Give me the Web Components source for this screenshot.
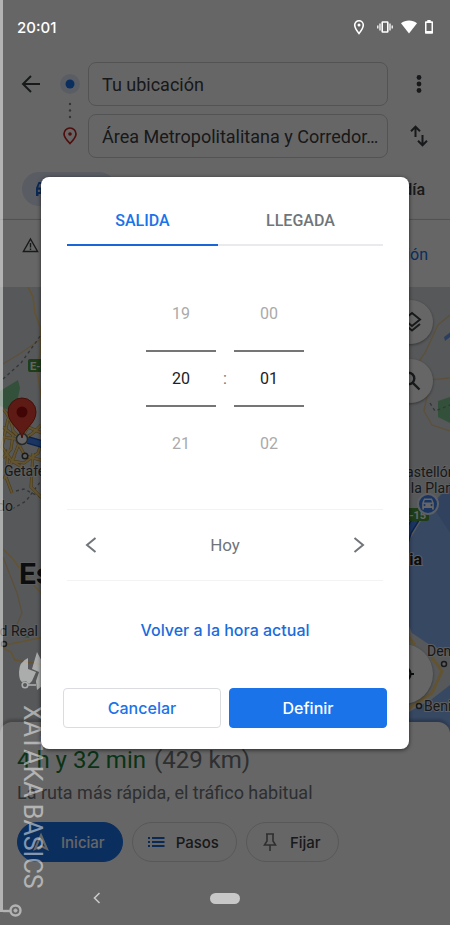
<!DOCTYPE html>
<html lang="es">
<head>
<meta charset="utf-8">
<meta name="viewport" content="width=device-width, initial-scale=1">
<title>Hora de salida</title>
<style>
html, body {
    margin: 0;
    background: #fff;
    font-family: Roboto, "Liberation Sans", sans-serif;
}
</style>
</head>
<body>
<maps-app></maps-app>

<script>
// every element shares this small reset
const base = `
*{
    box-sizing: border-box;
}

button, input{
    font: inherit;
    color: inherit;
    background: none;
    border: 0;
    padding: 0;
    margin: 0;
}

svg{
    display: block;
    flex: none;
}
`;

function define(name, css, html) {
    const template = document.createElement("template");
    template.innerHTML = `<style>${base}${css}</style>${html}`;

    customElements.define(name, class extends HTMLElement {
        constructor() {
            super();
            this.attachShadow({ mode: "open" });
            this.shadowRoot.appendChild(template.content.cloneNode(true));
        }
    });
}

define("status-bar", `
:host{
    display: flex;
    align-items: center;
    justify-content: space-between;
    height: 54px;
    padding: 0 17px;
    position: relative;
    z-index: 2;
    color: #fff;
    font: 500 15px Inter, sans-serif;
}

div{
    display: flex;
    gap: 8px;
}
`, `
<time>20:01</time>
<div>
    <svg width="16" height="16" viewBox="0 0 16 16" fill="none" stroke="#fff" stroke-width="1.6"><path d="M6 14.5C3.200 11 1.700 8.600 1.700 6a4.300 4.300 0 0 1 8.600 0c0 2.600-1.500 5-4.300 8.500z"/><circle cx="6" cy="6" r="1.500" fill="#fff" stroke="none"/></svg>
    <svg width="16" height="16" viewBox="0 0 16 16" fill="none" stroke="#fff"><rect x="5.200" y="3" width="5.600" height="10" rx="0.500" stroke-width="1.600"/><path d="M3 4.500v7M13 4.500v7" stroke-width="1.300"/><path d="M.8 6.500v3M15.200 6.500v3" stroke-width="1.300"/></svg>
    <svg width="16" height="16" viewBox="0 0 16 16" fill="#fff"><path d="M0 4.200C4.500.6 11.500.6 16 4.200L8 14.500z"/></svg>
    <svg width="8" height="16" viewBox="0 0 8 16" fill="#fff"><path fill-rule="evenodd" d="M2.300 1h3.400v1.300H7.200q.8 0 .8.800V14q0 .8-.8.800H.8Q0 14.800 0 14V3.100q0-.8.800-.8h1.500zM1.500 4v8h5V4z"/></svg>
</div>
`);

define("route-header", `
:host{
    display: grid;
    grid-template-columns: 46px 34px 1fr 62px;
    align-items: center;
    row-gap: 8px;
    padding: 8px 0 0 8px;
    color: #3c4043;
}

.stops{
    grid-column: 2;
    grid-row: 1 / 3;
}

button{
    display: grid;
    place-items: center;
    height: 44px;
}

input{
    grid-column: 3;
    width: 100%;
    height: 44px;
    padding: 0 4px 0 13px;
    border: 1px solid #cdd0d4;
    border-radius: 8px;
    font-size: 18px;
    text-overflow: ellipsis;
}
`, `
<button aria-label="Atrás"><svg width="20" height="20" viewBox="0 0 20 20" fill="none" stroke="#3c4043" stroke-width="2"><path d="M19 10H2M10 2l-8 8 8 8"/></svg></button>
<svg class="stops" width="34" height="96" viewBox="0 0 34 96">
    <circle cx="16" cy="22" r="10" fill="#e3e9fb"/>
    <circle cx="16" cy="22" r="4.500" fill="#1a73e8"/>
    <g fill="#80868b"><circle cx="16" cy="42" r="1.200"/><circle cx="16" cy="48.500" r="1.200"/><circle cx="16" cy="55" r="1.200"/></g>
    <path d="M16 81.500c-4-4-6-6.500-6-9.500a6 6 0 0 1 12 0c0 3-2 5.500-6 9.500z" fill="none" stroke="#c5221f" stroke-width="1.700"/>
    <circle cx="16" cy="72" r="1.800" fill="#c5221f"/>
</svg>
<input aria-label="Origen" value="Tu ubicación">
<button aria-label="Más opciones"><svg width="6" height="20" viewBox="0 0 6 20" fill="#3c4043"><circle cx="3" cy="3.500" r="2.400"/><circle cx="3" cy="10" r="2.400"/><circle cx="3" cy="16.500" r="2.400"/></svg></button>
<input aria-label="Destino" value="Área Metropolitalitana y Corredor…">
<button aria-label="Invertir ruta"><svg width="18" height="22" viewBox="0 0 18 22" fill="none" stroke="#3c4043" stroke-width="2"><path d="M5.500 12V2M1 6.200l4.500-4.500L10 6.200M12.500 10v10M8 15.800l4.500 4.500 4.500-4.500"/></svg></button>
`);

define("travel-modes", `
:host{
    display: flex;
    align-items: center;
    justify-content: space-between;
    padding: 14px 25px 13px 22px;
    border-bottom: 1px solid #dadce0;
    color: #3c4043;
    font-size: 16px;
    font-weight: 500;
}

button{
    display: flex;
    align-items: center;
    gap: 8px;
    height: 34px;
}

.selected{
    width: 94px;
    padding-left: 12px;
    border-radius: 17px;
    background: #dfe5f8;
    color: #1967d2;
}
`, `
<button class="selected"><svg width="18" height="18" viewBox="0 0 18 18" fill="#1967d2"><path fill-rule="evenodd" d="M4.500 2h9l2.500 6v8h-2.500v-2h-9v2H2V8zM5.500 4L4.300 7.500h9.400L12.500 4zM5 9.500a1.300 1.300 0 1 0 .1 0zM13 9.500a1.300 1.300 0 1 0 .1 0z"/></svg>4 h</button>
<button>1 día</button>
`);

define("route-notice", `
:host{
    display: flex;
    justify-content: space-between;
    align-items: flex-start;
    height: 67px;
    padding: 17px 22px 0;
    box-shadow: 0 1px 3px rgba(0, 0, 0, .4);
    position: relative;
    background: #fff;
}

a{
    padding-top: 8px;
    color: #1a73e8;
    font-size: 16px;
    line-height: 20px;
    text-decoration: none;
}
`, `
<svg width="17" height="16" viewBox="0 0 17 16"><path d="M8.500 2L15.600 14.500H1.400z" fill="none" stroke="#3c4043" stroke-width="1.400"/><path d="M8.500 6v4.500M8.500 11.500V13" stroke="#3c4043" stroke-width="1.400"/></svg>
<a href="#">Más información</a>
`);

define("route-map", `
:host{
    display: block;
    flex: 1;
    min-height: 200px;
    margin-bottom: -12px;
    position: relative;
    overflow: hidden;
    background: #d9dcdf;
}

.map{
    position: absolute;
    inset: 0;
    width: 100%;
    height: 100%;
}

text{
    fill: #3c4043;
    font-size: 14px;
    paint-order: stroke;
    stroke: #e8eaed;
    stroke-width: 2px;
}

.big{
    fill: #202124;
    font-size: 30px;
    font-weight: 700;
}

.city{
    fill: #202124;
    font-size: 16px;
    font-weight: 700;
}

.sign{
    fill: #fff;
    stroke: none;
    font-size: 11px;
    font-weight: 700;
}

button{
    position: absolute;
    right: 17px;
    display: grid;
    place-items: center;
    width: 44px;
    height: 44px;
    border-radius: 50%;
    background: #fff;
    box-shadow: 0 1px 3px rgba(0, 0, 0, .4);
}

.layers{
    top: 13px;
}

.search{
    top: 72px;
}

.locate{
    bottom: 30px;
    width: 60px;
    height: 60px;
}
`, `
<svg class="map" viewBox="0 0 450 447" preserveAspectRatio="xMidYMid slice">
    <path d="M450 196L427 224 409 254 398 285 400 318 412 346 430 358 450 366zM450 398L432 412 409 425 380 447H450z" fill="#8ab4f8"/>
    <path d="M450 196l-17 24 17 26z" fill="#7aa5ec"/>
    <path d="M0 104l18-11 2 8-3 15-9 7-8-4zM438 114l12-4v26l-12-6zM23 350l9-9-3 10z" fill="#81c995"/>
    <path d="M444 50l8-6-2 6-5 4z" fill="#669df6"/>
    <g fill="none" stroke="#f7cf7d" stroke-width="1.600">
        <path d="M28 0l5 10 2 16 5 14 1 20-4 24 5 30"/>
        <path d="M3 262l10 10 10 14 18 20" />
        <path d="M3 361l8 4 4 8 30 5M0 359l20-4 25-5"/>
    </g>
    <g fill="none" stroke="#e6c898" stroke-width="1.400">
        <path d="M3 77l18-11 20-14M3 270l14 36 5 20-7 16"/>
        <path d="M450 28l-12 10-13 28-16 22M409 80l10 14 31-3M430 94l-6 30 8 14 18 6"/>
    </g>
    <path d="M3 92l18-16 20-28M16 204l8-2 16 8M12 222l14-8 15-20M430 116l5 8 15-6" fill="none" stroke="#80868b" stroke-width="1.400" stroke-dasharray="3 3"/>
    <g fill="none" stroke="#b58b35" stroke-width="3">
        <path d="M3 122q8 8 10 22l8 8q10-2 20-14M3 140l10 8-2 14-8 9M8 132l-6 28 10 14 12 2 14-10 5-14M3 150l13 2 9 17 16 4M15 168l-11 24M33 166l-2 34 12 12M8 162l-2 28 6 16M42 146l-14-6-8 14-8 20 10 6"/>
    </g>
    <g fill="none" stroke="#f4cf7b" stroke-width="2">
        <path d="M3 122q8 8 10 22l8 8q10-2 20-14M3 140l10 8-2 14-8 9M8 132l-6 28 10 14 12 2 14-10 5-14M3 150l13 2 9 17 16 4M15 168l-11 24M33 166l-2 34 12 12M8 162l-2 28 6 16M42 146l-14-6-8 14-8 20 10 6"/>
        <path d="M409 350l6 8M430 368l12 16-10 22-24 16" stroke-width="3"/>
    </g>
    <path d="M28 153l14 4 30 28 150 70 180 10 6-20 22-36" fill="none" stroke="#1a56c4" stroke-width="8"/>
    <path d="M28 153l14 4 30 28 150 70 180 10 6-20 22-36" fill="none" stroke="#4285f4" stroke-width="5"/>

    <rect x="28" y="72" width="26" height="13" rx="2" fill="#4b9a3c"/>
    <text class="sign" x="30" y="83">E-5</text>
    <rect x="400" y="221" width="29" height="13" rx="2" fill="#4b9a3c"/>
    <text class="sign" x="403" y="232">E-15</text>

    <circle cx="22" cy="152" r="5.500" fill="#fff" stroke="#5f6368" stroke-width="1.500"/>
    <path d="M22 151c-1-9-14-14-14-26a14 14 0 0 1 28 0c0 12-13 17-14 26z" fill="#ea4335" stroke="#a52714"/>
    <circle cx="22" cy="125" r="5.500" fill="#a50e0e"/>

    <g fill="#e8eaed" stroke="#3c4043" stroke-width="1.500">
        <circle cx="25" cy="169" r="2.800"/>
        <circle cx="4" cy="357" r="2.500"/>
        <circle cx="444" cy="377" r="2.500"/>
        <circle cx="419" cy="419" r="2.500"/>
    </g>

    <text x="4" y="189">Getafe</text>
    <text x="13" y="224" text-anchor="end">Toledo</text>
    <text class="big" x="19" y="297">España</text>
    <text x="38" y="349" text-anchor="end">Ciudad Real</text>
    <text x="397" y="190">Castellón</text>
    <text x="392" y="206">de la Plana</text>
    <text class="city" x="422" y="278" text-anchor="end">Valencia</text>
    <text x="427" y="369">Denia</text>
    <text x="424" y="424">Benidorm</text>

    <circle cx="428" cy="217" r="10" fill="#4285f4" stroke="#e8f0fe" stroke-width="2"/>
    <path fill="#fff" fill-rule="evenodd" d="M424 211.500h8l1.800 4.500v6.500H432V221h-8v1.500h-1.800V216zM424.800 213l-.9 2.500h8.200l-.9-2.500zM424.500 217a1 1 0 1 0 .1 0zM431.500 217a1 1 0 1 0 .1 0z"/>
</svg>
<button class="layers" aria-label="Capas"><svg width="22" height="22" viewBox="0 0 22 22" fill="none" stroke="#3c4043" stroke-width="2"><path d="M12 2l8 6.500-8 6.500-8-6.500zM4 13l8 6.500 8-6.500"/></svg></button>
<button class="search" aria-label="Buscar"><svg width="22" height="22" viewBox="0 0 22 22" fill="none" stroke="#3c4043" stroke-width="2.400"><circle cx="8.500" cy="8.500" r="5.800"/><path d="M12.800 12.800L19.500 19.500"/></svg></button>
<button class="locate" aria-label="Mi ubicación"><svg width="24" height="24" viewBox="0 0 24 24" fill="none" stroke="#202124" stroke-width="2.200"><circle cx="12" cy="12" r="7.500"/><circle cx="12" cy="12" r="3" fill="#202124"/><path d="M12 1v4M12 19v4M1 12h4M19 12h4"/></svg></button>
`);

define("pill-button", `
:host{
    display: block;
}

button{
    display: flex;
    align-items: center;
    gap: 8px;
    height: 40px;
    padding: 0 17px 0 11px;
    border: 1px solid #dadce0;
    border-radius: 20px;
    color: #3c4043;
    font: 500 15px Inter, sans-serif;
}

:host([primary]) button{
    background: #1a73e8;
    border-color: #1a73e8;
    color: #fff;
}
`, `
<button><slot name="icon"></slot><slot></slot></button>
`);

define("route-summary", `
:host{
    display: block;
    position: relative;
    padding: 22px 17px 9px;
    border-radius: 12px 12px 0 0;
    background: #fff;
    box-shadow: 0 -3px 3px rgba(0, 0, 0, .2);
}

h1{
    margin: 0;
    color: #188038;
    font-size: 24px;
    font-weight: 400;
    line-height: 32px;
}

span{
    margin-left: 2px;
    color: #70757a;
}

p{
    margin: 6px 0 18px;
    color: #70757a;
    font-size: 18px;
    line-height: 22px;
}

div{
    display: flex;
    gap: 9px;
}
`, `
<h1>4 h y 32 min <span>(429 km)</span></h1>
<p>La ruta más rápida, el tráfico habitual</p>
<div>
    <pill-button primary><svg slot="icon" width="24" height="24" viewBox="0 0 24 24" fill="none" stroke="#fff" stroke-width="2"><path d="M12 5l6 14-6-3-6 3z"/></svg>Iniciar</pill-button>
    <pill-button><svg slot="icon" width="24" height="24" viewBox="0 0 24 24" stroke="#1967d2" stroke-width="2"><path d="M8 8h12.500M8 12h12.500M8 16h12.500M4 8h2M4 12h2M4 16h2"/></svg>Pasos</pill-button>
    <pill-button><svg slot="icon" width="24" height="24" viewBox="0 0 24 24" fill="none" stroke="#70757a" stroke-width="1.600"><path d="M8 4h8M9 4v7l-2.500 4h11L15 11V4M12 15v6"/></svg>Fijar</pill-button>
</div>
`);

define("nav-bar", `
:host{
    display: grid;
    grid-template-columns: 1fr 30px 1fr;
    align-items: center;
    height: 54px;
    position: relative;
    z-index: 2;
}

button{
    display: grid;
    place-items: center;
    height: 40px;
}

.back{
    width: 40px;
    margin-left: 77px;
}

.home::before{
    content: "";
    width: 30px;
    height: 11px;
    border-radius: 6px;
    background: #c8c8c8;
}
`, `
<button class="back" aria-label="Volver"><svg width="8" height="12" viewBox="0 0 8 12" fill="none" stroke="#c8c8c8" stroke-width="1.600"><path d="M6.500 1L1.500 6l5 5"/></svg></button>
<button class="home" aria-label="Inicio"></button>
`);

// brand mark down the left edge, over the dimmed page
define("brand-mark", `
:host{
    display: flex;
    flex-direction: column;
    align-items: flex-start;
    justify-content: flex-end;
    position: absolute;
    inset: 0 auto 0 0;
    width: 46px;
    z-index: 2;
    opacity: .5;
    pointer-events: none;
    color: #fff;
}

.line{
    position: absolute;
    left: 0;
    top: 0;
    bottom: 13px;
    width: 3px;
    background: #fff;
}

.hat{
    margin-left: 18px;
}

span{
    margin: 12px 0 14px 17px;
    writing-mode: vertical-rl;
    font-size: 25px;
    line-height: 30px;
}

.end{
    margin: 0 0 8px 3px;
}
`, `
<div class="line"></div>
<svg class="hat" width="28" height="42" viewBox="0 0 28 42"><path d="M10 7Q1 11 1 21q0 8 3 10l4-1 3 3 3-3 4-9-8-3z" fill="#fff"/><path d="M19 1l9 17v14l-9 7-1-9 3-9-7-3z" fill="#fff"/><path d="M10 34h8" fill="none" stroke="#fff" stroke-width="1.600"/><circle cx="7" cy="34" r="2.800" fill="none" stroke="#fff" stroke-width="1.600"/></svg>
<span>XATAKA BASICS</span>
<svg class="end" width="20" height="14" viewBox="0 0 20 14" fill="none" stroke="#fff"><path d="M0 8h7" stroke-width="2.400"/><circle cx="12.500" cy="7.500" r="5" stroke-width="2.400"/><circle cx="12.500" cy="7.500" r="1.600" fill="#fff"/></svg>
`);

class TimeWheel extends HTMLElement {
    constructor() {
        super();
        this.attachShadow({ mode: "open" });
        this.shadowRoot.innerHTML = `
<style>${base}
:host{
    display: grid;
    grid-template-rows: 73px 57px 74px;
    color: #aaa;
    font-size: 16px;
    text-align: center;
}

input{
    width: 100%;
    border: 2px solid #757575;
    border-width: 2px 0;
    color: #202124;
    text-align: center;
}
</style>
<button class="prev"></button>
<input inputmode="numeric">
<button class="next"></button>
`;
        this.prev = this.shadowRoot.querySelector(".prev");
        this.next = this.shadowRoot.querySelector(".next");
        this.input = this.shadowRoot.querySelector("input");
    }

    connectedCallback() {
        this.max = Number(this.getAttribute("max"));
        this.value = Number(this.getAttribute("value"));
        this.input.setAttribute("aria-label", this.getAttribute("label"));
        this.prev.onclick = () => this.step(-1);
        this.next.onclick = () => this.step(1);
        this.input.onchange = () => {
            this.value = Number(this.input.value) || 0;
            this.step(0);
        };
        this.render();
    }

    wrap(n) {
        return (n + this.max) % this.max;
    }

    step(by) {
        this.value = this.wrap(this.value + by);
        this.render();
    }

    render() {
        const pad = n => String(this.wrap(n)).padStart(2, "0");
        this.prev.textContent = pad(this.value - 1);
        this.input.value = pad(this.value);
        this.next.textContent = pad(this.value + 1);
    }
}

customElements.define("time-wheel", TimeWheel);

define("time-dialog", `
:host{
    display: grid;
    place-items: center;
    position: absolute;
    inset: 0;
    z-index: 3;
}

section{
    width: calc(100% - 82px);
    max-width: 420px;
    padding: 18px 22px 21px;
    border-radius: 8px;
    background: #fff;
    box-shadow: 0 1px 4px rgba(0, 0, 0, .6);
}

.tabs{
    display: flex;
    margin: 0 4px;
}

.tabs button{
    flex: 1 1 auto;
    height: 51px;
    padding-top: 2px;
    border-bottom: 2px solid #e8eaed;
    color: #70757a;
    font-size: 16px;
    font-weight: 500;
}

.tabs .selected{
    border-color: #1a66d6;
    color: #1a73e8;
}

.picker{
    display: grid;
    grid-template-columns: 70px 18px 70px;
    justify-content: center;
    align-items: center;
    padding: 31px 0 28px;
    color: #70757a;
    font-size: 16px;
    text-align: center;
}

.date{
    display: flex;
    align-items: center;
    justify-content: space-between;
    height: 72px;
    margin: 0 4px;
    border: 1px solid #f1f3f4;
    border-width: 1px 0;
    color: #70757a;
    font-size: 17px;
}

.date button{
    display: grid;
    place-items: center;
    width: 48px;
    height: 48px;
}

.reset{
    display: block;
    height: 48px;
    margin: 25px auto 34px;
    color: #1a6cdb;
    font: 500 16px Inter, sans-serif;
}

.actions{
    display: grid;
    grid-template-columns: 1fr 1fr;
    gap: 8px;
    font: 500 16px Inter, sans-serif;
}

.actions button{
    height: 40px;
    border: 1px solid #dadce0;
    border-radius: 4px;
    color: #1a73e8;
}

.actions .primary{
    border-color: #1a73e8;
    background: #1a73e8;
    color: #fff;
}
`, `
<section role="dialog" aria-label="Hora de salida">
    <div class="tabs" role="tablist">
        <button class="selected" role="tab" aria-selected="true">SALIDA</button>
        <button role="tab" aria-selected="false">LLEGADA</button>
    </div>
    <div class="picker">
        <time-wheel label="Hora" max="24" value="20"></time-wheel>
        <span>:</span>
        <time-wheel label="Minutos" max="60" value="1"></time-wheel>
    </div>
    <div class="date">
        <button aria-label="Día anterior"><svg width="12" height="16" viewBox="0 0 12 16" fill="none" stroke="#70757a" stroke-width="2"><path d="M10.500 1L2 8l8.500 7"/></svg></button>
        <span>Hoy</span>
        <button aria-label="Día siguiente"><svg width="12" height="16" viewBox="0 0 12 16" fill="none" stroke="#70757a" stroke-width="2"><path d="M1.500 1L10 8l-8.500 7"/></svg></button>
    </div>
    <button class="reset">Volver a la hora actual</button>
    <div class="actions">
        <button>Cancelar</button>
        <button class="primary">Definir</button>
    </div>
</section>
`);

define("maps-app", `
:host{
    display: flex;
    flex-direction: column;
    min-height: 100vh;
    position: relative;
    overflow: hidden;
}

.scrim{
    position: absolute;
    inset: 0;
    z-index: 1;
    background: rgba(0, 0, 0, .6);
}
`, `
<status-bar></status-bar>
<route-header></route-header>
<travel-modes></travel-modes>
<route-notice></route-notice>
<route-map></route-map>
<route-summary></route-summary>
<nav-bar></nav-bar>
<div class="scrim"></div>
<brand-mark></brand-mark>
<time-dialog></time-dialog>
`);
</script>
</body>
</html>
